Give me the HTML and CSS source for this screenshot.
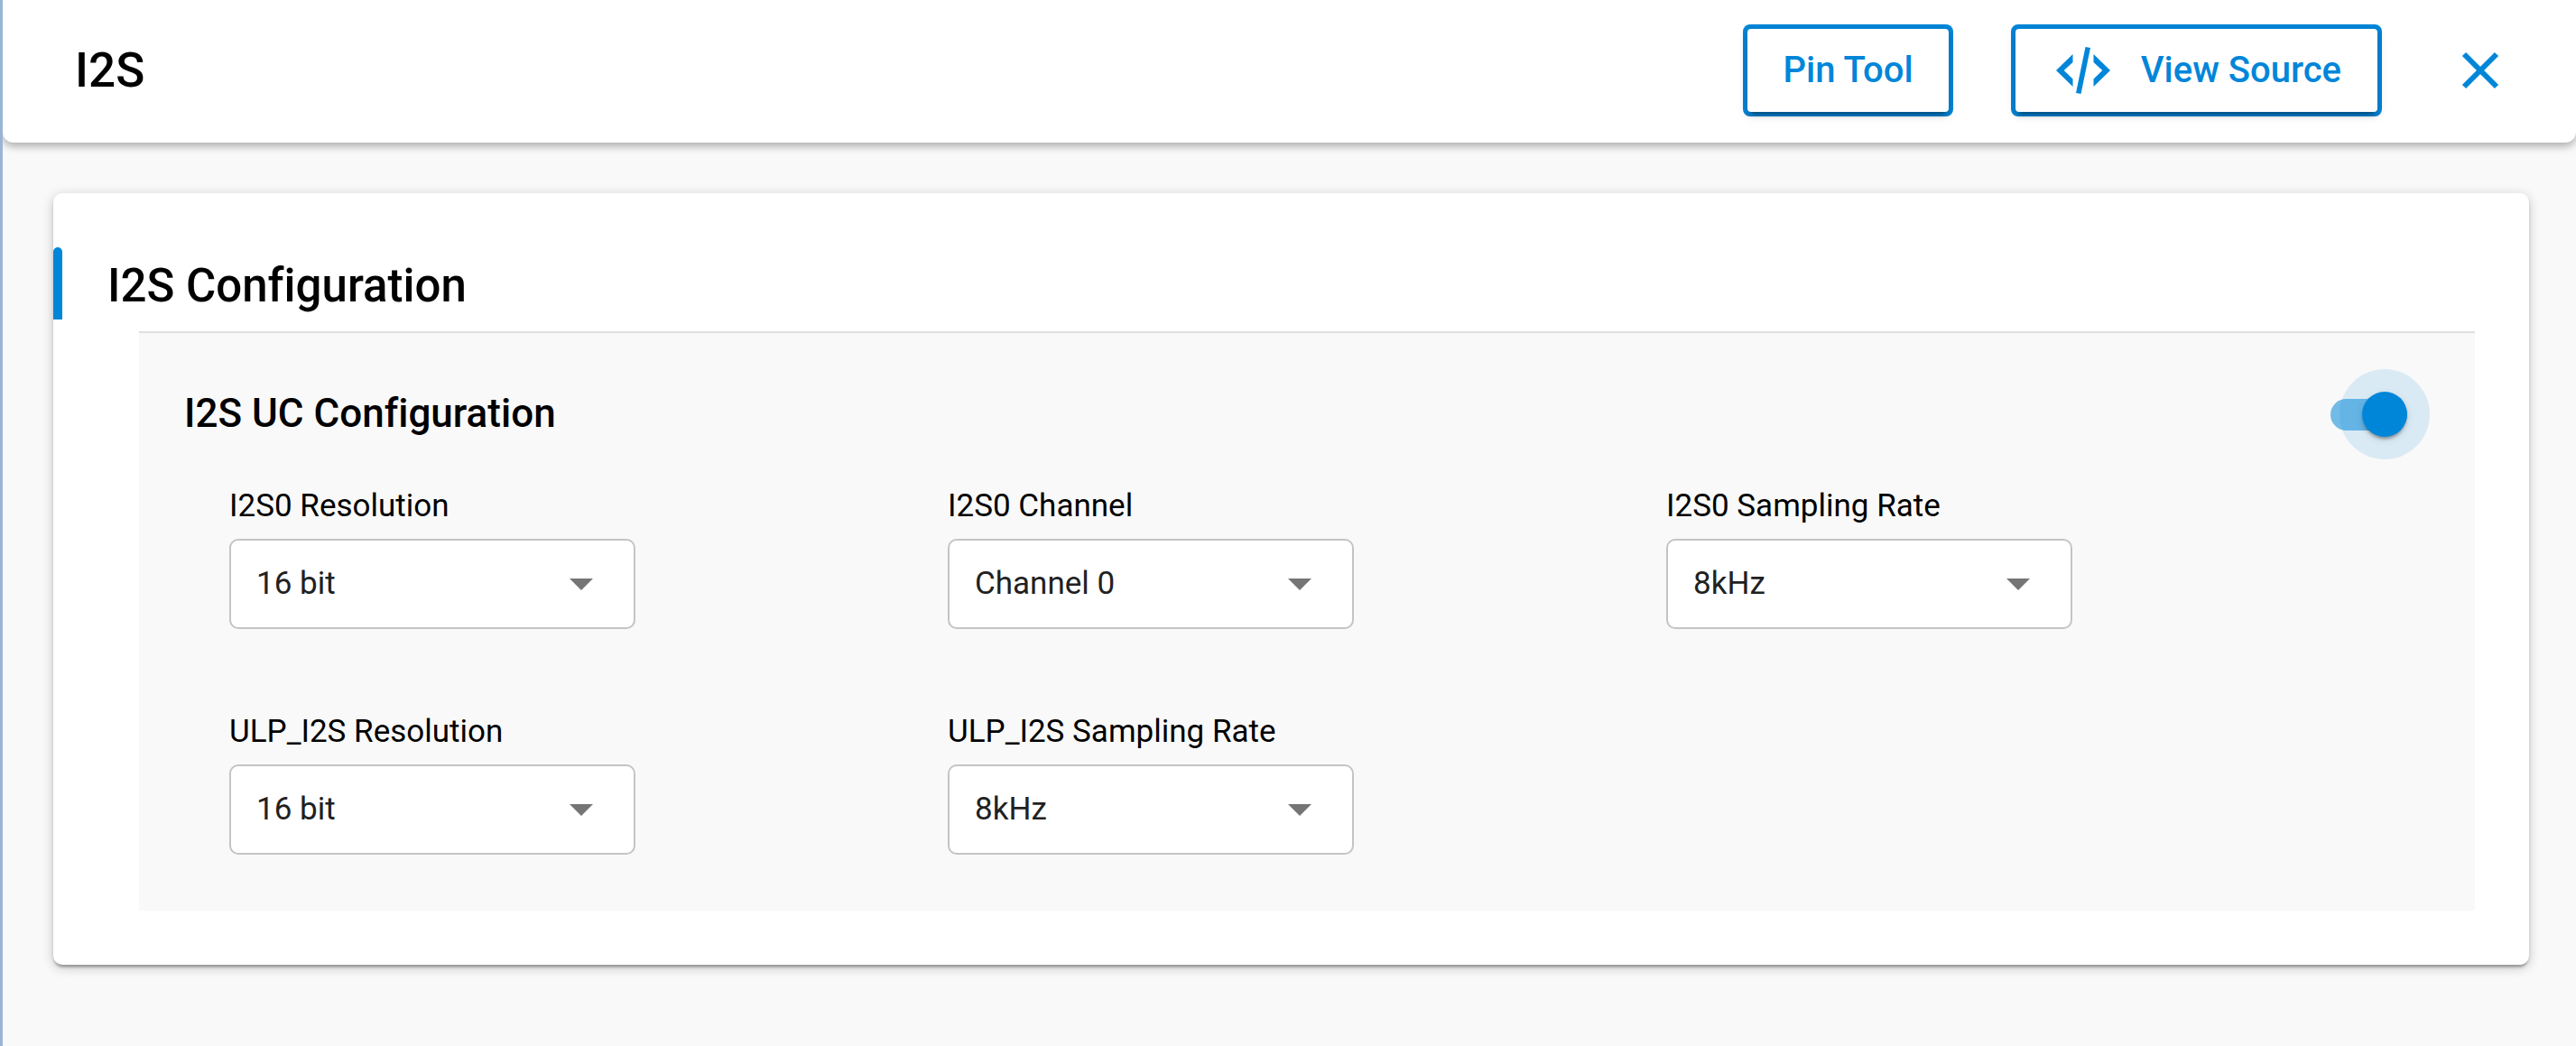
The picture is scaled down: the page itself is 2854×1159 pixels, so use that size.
FILE: index.html
```html
<!DOCTYPE html>
<html lang="en">
<head>
<meta charset="utf-8">
<title>I2S</title>
<link rel="stylesheet" href="styles.css">
</head>
<body>
<header class="topbar">
  <h1 class="topbar-title">I2S</h1>
  <button class="outlined" type="button"><span class="outlined-face pin">Pin Tool</span></button>
  <button class="outlined" type="button"><span class="outlined-face source"><svg class="code-icon" viewBox="0 0 60 54" aria-hidden="true"><path d="M18.500 9v9L8.700 27l9.800 9.500v8.500L0 27zM41.500 9v9l9.800 9-9.800 9.500v8.500L60 27z"/><path d="M32.500 1l5.500 1L27.500 53l-5.500-1z"/></svg>View Source</span></button>
  <button class="close" type="button" aria-label="Close"><svg viewBox="0 0 42 42" aria-hidden="true"><path d="M3 3l36 36M39 3L3 39"/></svg></button>
</header>
<main class="content">
  <section class="card">
    <h2 class="card-title">I2S Configuration</h2>
    <div class="panel">
      <div class="panel-head">
        <h3 class="panel-title" id="uc-title">I2S UC Configuration</h3>
        <input class="switch" type="checkbox" role="switch" aria-labelledby="uc-title" checked>
      </div>
      <div class="fields">
        <div class="field">
          <label for="i2s0-res">I2S0 Resolution</label>
          <select id="i2s0-res"><option>16 bit</option></select>
        </div>
        <div class="field">
          <label for="i2s0-ch">I2S0 Channel</label>
          <select id="i2s0-ch"><option>Channel 0</option></select>
        </div>
        <div class="field">
          <label for="i2s0-rate">I2S0 Sampling Rate</label>
          <select id="i2s0-rate"><option>8kHz</option></select>
        </div>
        <div class="field">
          <label for="ulp-res">ULP_I2S Resolution</label>
          <select id="ulp-res"><option>16 bit</option></select>
        </div>
        <div class="field">
          <label for="ulp-rate">ULP_I2S Sampling Rate</label>
          <select id="ulp-rate"><option>8kHz</option></select>
        </div>
      </div>
    </div>
  </section>
</main>
</body>
</html>
```
FILE: styles.css
```css
* { box-sizing: border-box; }

body {
  margin: 0;
  min-height: 100vh;
  border-left: 3px solid #9ab4d4;
  background: #f9f9f9;
  color: #000;
  font-family: Roboto, "Liberation Sans", sans-serif;
  font-variant-ligatures: none;
}

h1, h2, h3 { margin: 0; font-weight: 500; }

button { padding: 0; font: inherit; cursor: pointer; }

.topbar {
  display: flex;
  align-items: center;
  height: 158px;
  padding: 0 85px 2px 80px;
  border-radius: 0 0 12px 12px;
  background: #fff;
  box-shadow: 0 5px 10px rgba(0, 0, 0, .2), 0 3px 10px rgba(0, 0, 0, .12);
}

.topbar-title { margin-right: auto; font-size: 53px; line-height: 64px; }

.outlined {
  margin-right: 64px;
  border: 5px solid #0086d9;
  border-radius: 8px;
  background: #0086d9;
  color: #0086d9;
  font-size: 40px;
  font-weight: 500;
  line-height: 48px;
}

.outlined-face {
  display: flex;
  align-items: center;
  height: 92px;
  border-radius: 4px;
  background: #fff;
  box-shadow: 0 8px 3px -5px rgba(0, 0, 0, .2), 0 5px 5px rgba(0, 0, 0, .14), 0 3px 13px rgba(0, 0, 0, .12);
}

.pin { padding: 0 39px; }
.source { gap: 34px; padding: 0 40px 0 45px; }

.code-icon { width: 60px; height: 54px; fill: #0086d9; }

.close { width: 42px; height: 42px; margin-left: 24px; border: 0; background: none; }
.close svg { display: block; stroke: #0086d9; stroke-width: 6; fill: none; }

.content { padding: 56px 52px 90px 56px; }

.card {
  padding: 60px 60px 60px 0;
  border-radius: 10px;
  background: #fff;
  box-shadow: 0 5px 3px -3px rgba(0, 0, 0, .2), 0 3px 3px rgba(0, 0, 0, .14), 0 3px 13px rgba(0, 0, 0, .22);
}

.card-title {
  position: relative;
  padding-left: 60px;
  font-size: 51px;
  line-height: 86px;
}

.card-title::before {
  content: "";
  position: absolute;
  left: 0;
  top: 0;
  width: 10px;
  height: 80px;
  border-radius: 5px 5px 0 0;
  background: #0086d9;
}

.panel {
  margin: 7px 0 0 95px;
  padding: 40px 50px 62px;
  border-top: 2px solid #e0e0e0;
  background: #f9f9f9;
}

.panel-head { display: flex; align-items: center; justify-content: space-between; height: 100px; padding-right: 25px; }
.panel-title { padding-bottom: 2px; font-size: 44px; line-height: 52px; }

.switch {
  appearance: none;
  position: relative;
  width: 85px;
  height: 35px;
  margin: 0;
  border-radius: 18px;
  background: rgba(0, 134, 217, .54);
}

/* halo around the thumb */
.switch::before {
  content: "";
  position: absolute;
  right: -25px;
  top: -33px;
  width: 100px;
  height: 100px;
  border-radius: 50%;
  background: rgba(0, 134, 217, .12);
}

.switch::after {
  content: "";
  position: absolute;
  right: 0;
  top: -8px;
  width: 50px;
  height: 50px;
  border-radius: 50%;
  background: #0086d9;
  box-shadow: 0 5px 3px -3px rgba(0, 0, 0, .2), 0 3px 3px rgba(0, 0, 0, .14), 0 3px 8px rgba(0, 0, 0, .12);
}

.fields {
  display: grid;
  grid-template-columns: repeat(3, 1fr);
  row-gap: 88px;
  padding: 26px 50px 0;
}

.field { display: flex; flex-direction: column; gap: 10px; }
.field label { font-size: 35px; line-height: 52px; }

.field select {
  appearance: none;
  width: 450px;
  max-width: 100%;
  height: 100px;
  padding: 0 80px 2px 28px;
  border: 2px solid #c4c4c4;
  border-radius: 10px;
  background: #fff url("data:image/svg+xml,%3Csvg xmlns='http://www.w3.org/2000/svg' viewBox='0 0 26 13'%3E%3Cpath d='M0 0h26L13 13z' fill='%23757575'/%3E%3C/svg%3E") no-repeat right 45px center / 26px 13px;
  color: #212121;
  font: inherit;
  font-size: 35px;
}
```
